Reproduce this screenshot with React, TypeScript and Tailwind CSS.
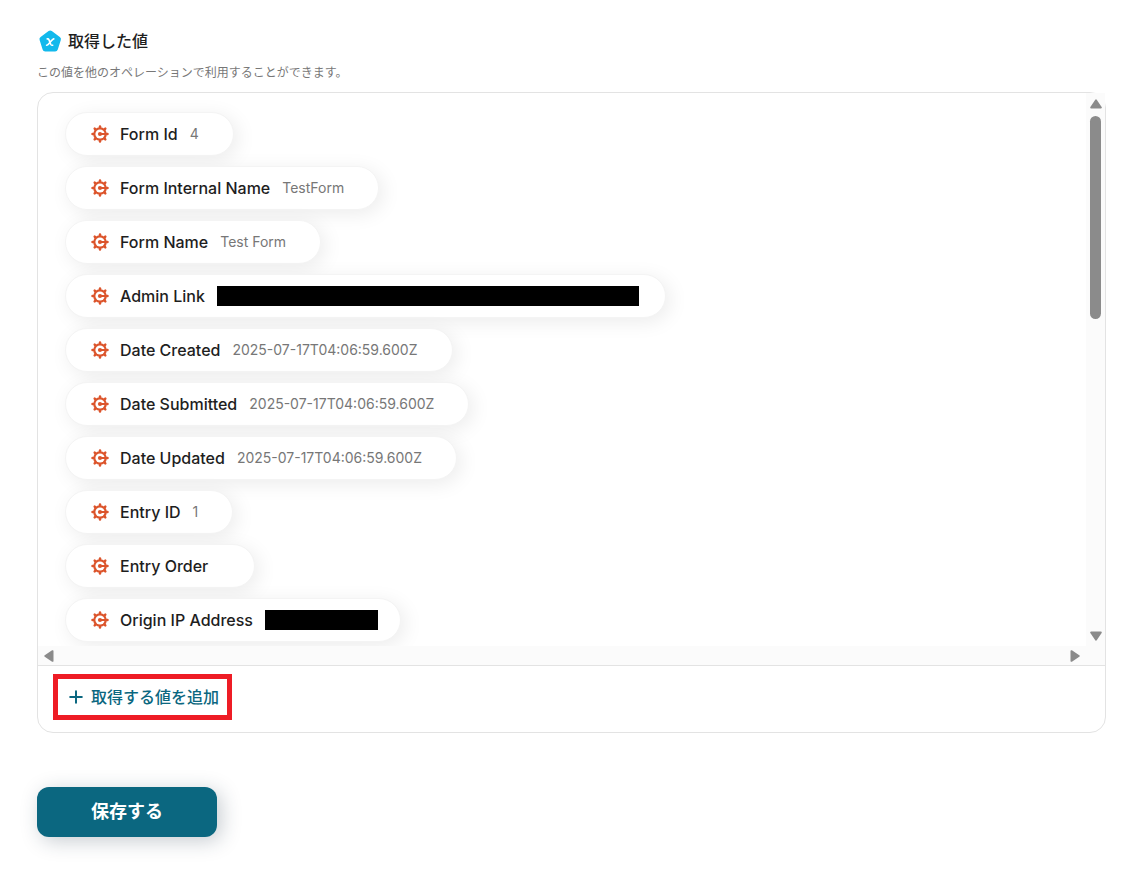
import { Plus } from "lucide-react";

type FieldValue = { label: string; value?: string; masked?: string };

const FIELDS: FieldValue[] = [
  { label: "Form Id", value: "4" },
  { label: "Form Internal Name", value: "TestForm" },
  { label: "Form Name", value: "Test Form" },
  { label: "Admin Link", masked: "w-[422px] h-5 ml-3 -mr-2" },
  { label: "Date Created", value: "2025-07-17T04:06:59.600Z" },
  { label: "Date Submitted", value: "2025-07-17T04:06:59.600Z" },
  { label: "Date Updated", value: "2025-07-17T04:06:59.600Z" },
  { label: "Entry ID", value: "1" },
  { label: "Entry Order" },
  { label: "Origin IP Address", masked: "w-[113px] h-5 ml-3 -mr-3" },
];

const TEETH = [0, 45, 90, 135, 180, 225, 270, 315];

function ValueIcon() {
  return (
    <svg viewBox="0 0 24 24" className="w-6 h-6" aria-hidden="true">
      <path
        d="M10.6 2.1a2.8 2.8 0 0 1 3.2 0l8 5.8a2.8 2.8 0 0 1 1 3.1l-3 9.6a2.8 2.8 0 0 1-2.7 2H7.3a2.8 2.8 0 0 1-2.7-2l-3-9.6a2.8 2.8 0 0 1 1-3.1z"
        fill="#12b9ec"
      />
      <path
        d="M9.2 9.9h.7c.6 0 .8.3 1.1 1l1.7 4.4c.3.7.6 1 1.2 1h.8M15.8 9.9c-.9 0-1.4.5-3.5 3.2s-2.6 3.2-3.7 3.2"
        fill="none"
        stroke="#fff"
        strokeWidth="1.6"
        strokeLinecap="round"
      />
    </svg>
  );
}

function CogIcon() {
  return (
    <svg viewBox="0 0 18 18" className="w-[18px] h-[18px] shrink-0" fill="none" aria-hidden="true">
      {TEETH.map((angle) => (
        <path
          key={angle}
          d="M9 3.4V1.5"
          stroke="#dc552c"
          strokeWidth="2.5"
          strokeLinecap="round"
          transform={`rotate(${angle} 9 9)`}
        />
      ))}
      <circle cx="9" cy="9" r="6.8" fill="#dc552c" />
      <circle cx="9" cy="9" r="4.6" fill="#fff" />
      <circle cx="9" cy="9" r="2.1" fill="#dc552c" />
      <path d="M9 9h6" stroke="#dc552c" strokeWidth="2" />
    </svg>
  );
}

function Arrow({ className }: { className: string }) {
  return (
    <svg viewBox="0 0 12 10" className={`w-3 h-[10px] shrink-0 ${className}`} aria-hidden="true">
      <path d="M6 1.2 10.9 8.6H1.1z" fill="#8b8b8b" stroke="#8b8b8b" strokeWidth="1.8" strokeLinejoin="round" />
    </svg>
  );
}

function FieldPill({ field }: { field: FieldValue }) {
  return (
    <li className="flex items-center h-11 pl-[25px] pr-[34px] rounded-full border border-[#f4f4f4] bg-white shadow-[4px_4px_20px_rgba(0,0,0,0.08)]">
      <CogIcon />
      <span className="ml-[11px] text-base font-medium text-[#1e1e1e]">{field.label}</span>
      {field.masked ? (
        <span className={`bg-black ${field.masked}`} />
      ) : (
        <span className="ml-3 text-sm text-[#777]">{field.value}</span>
      )}
    </li>
  );
}

export default function App() {
  return (
    <main className="px-[37px] pt-[29px] pb-8 bg-white font-['Inter','Noto_Sans_CJK_JP',sans-serif]">
      <h1 className="flex items-center gap-[6px] h-6 pl-[1px] text-base font-medium text-[#1e1e1e]">
        <ValueIcon />
        取得した値
      </h1>
      <p className="mt-[11px] text-xs leading-[18px] text-[#777]">この値を他のオペレーションで利用することができます。</p>

      <section className="mt-[10px] rounded-2xl border border-[#e3e3e3] bg-white">
        <div className="flex">
          <ul className="flex flex-col items-start flex-1 gap-[10px] min-w-0 pl-[27px] pt-[19px] pb-1 overflow-hidden rounded-tl-2xl">
            {FIELDS.map((field) => (
              <FieldPill key={field.label} field={field} />
            ))}
          </ul>
          <div className="flex flex-col items-center w-[19px] pt-[6px] pb-[5px] bg-[#fbfbfb]">
            <Arrow className="" />
            <div className="w-[11px] h-[203px] mt-[7px] rounded-full bg-[#8b8b8b]" />
            <Arrow className="mt-auto rotate-180" />
          </div>
        </div>
        <div className="flex items-center justify-between h-[19px] pl-[5px] pr-6 bg-[#fbfbfb]">
          <Arrow className="-rotate-90" />
          <Arrow className="rotate-90" />
        </div>
        <div className="px-[15px] pt-2 pb-3 border-t border-[#e3e3e3]">
          <button className="flex items-center gap-[5px] h-[46px] px-2 border-[5px] border-[#ee1c25] text-base font-medium text-[#0b6780] cursor-pointer">
            <Plus className="w-5 h-5" strokeWidth={2.4} />
            取得する値を追加
          </button>
        </div>
      </section>

      <button className="mt-[54px] w-[180px] h-[50px] rounded-xl bg-[#0b6780] text-lg font-bold text-white shadow-[4px_4px_20px_rgba(30,50,70,0.25)] cursor-pointer">
        保存する
      </button>
    </main>
  );
}
